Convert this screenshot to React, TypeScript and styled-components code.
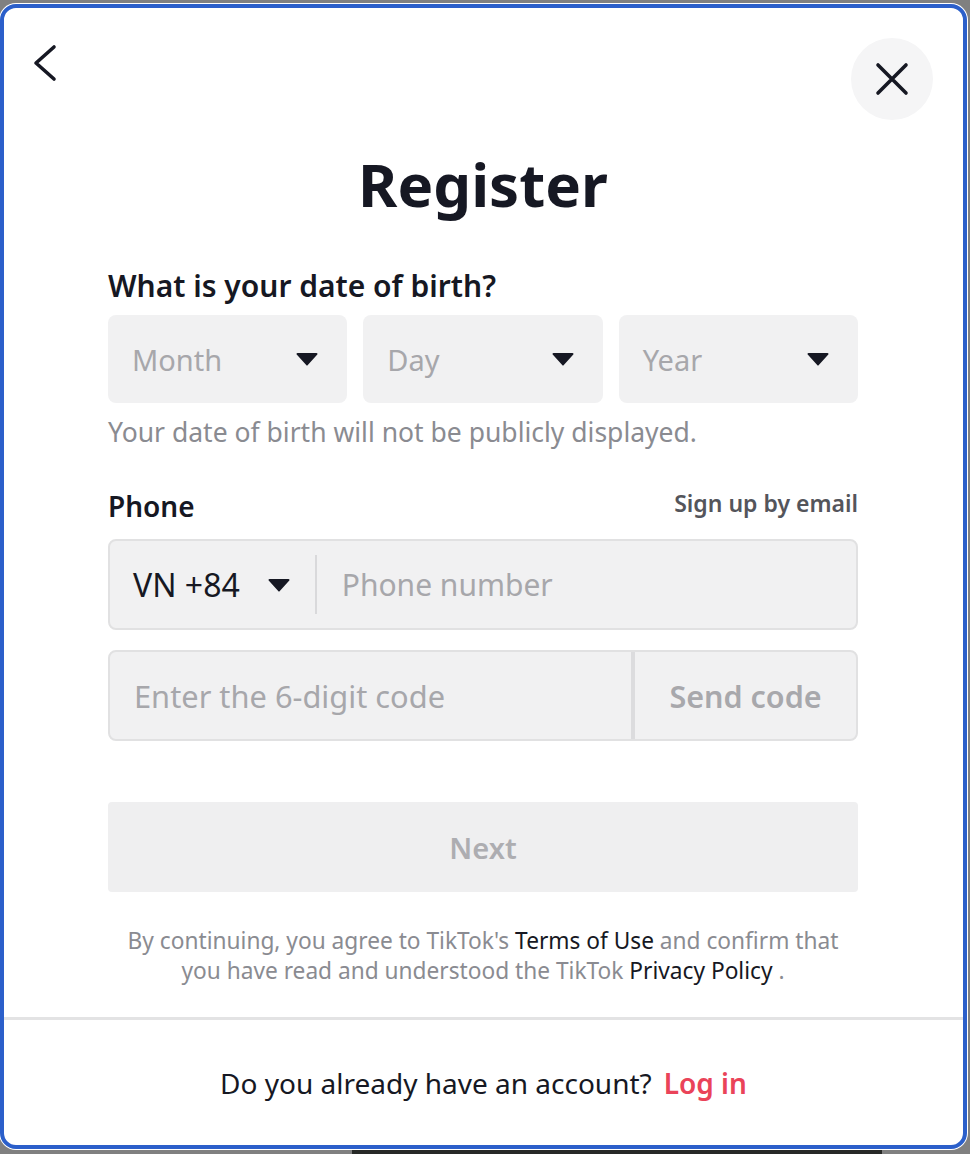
import React from "react";
import styled, { createGlobalStyle } from "styled-components";

const GlobalStyle = createGlobalStyle`
  html, body {
    margin: 0;
    padding: 0;
  }
  body {
    width: 970px;
    height: 1154px;
    overflow: hidden;
    background-color: #808080;
    background-image: linear-gradient(90deg, transparent 352px, #272927 352px, #272927 882px, transparent 882px);
    background-size: 100% 4px;
    background-position: bottom left;
    background-repeat: no-repeat;
    font-family: "Noto Sans", "Liberation Sans", sans-serif;
    color: #161823;
  }
  * { box-sizing: border-box; }
`;

const Modal = styled.div`
  margin-top: 4px;
  width: 967px;
  height: 1145px;
  border: 4px solid #2b5fca;
  border-radius: 16px;
  box-shadow: 0 0 0 1px #ffffff;
  background: #ffffff;
  display: flex;
  flex-direction: column;
  overflow: hidden;
`;

const TopBar = styled.div`
  display: flex;
  justify-content: space-between;
  align-items: flex-start;
  padding: 30px 30px 0 22px;
`;

const IconButton = styled.button`
  border: none;
  background: transparent;
  padding: 0;
  margin-top: 1px;
  display: flex;
  cursor: pointer;
`;

const CloseButton = styled.button`
  width: 82px;
  height: 82px;
  border-radius: 50%;
  border: none;
  background: #f5f5f6;
  display: flex;
  align-items: center;
  justify-content: center;
  padding: 0;
  cursor: pointer;
`;

const Body = styled.div`
  flex: 1;
  display: flex;
  flex-direction: column;
  padding: 0 105px 0 104px;
`;

const Title = styled.h1`
  margin: 26px 0 0;
  text-align: center;
  font-size: 60px;
  line-height: 76px;
  font-weight: 700;
  color: #161823;
`;

const Label = styled.div<{ $mt: number; $fs: number }>`
  margin-top: ${(p) => p.$mt}px;
  font-size: ${(p) => p.$fs}px;
  line-height: 36px;
  font-weight: 600;
  color: #161823;
`;

const LabelRow = styled.div`
  margin-top: 40px;
  height: 36px;
  display: flex;
  justify-content: space-between;
  align-items: center;
`;

const SideLink = styled.a`
  font-size: 23px;
  font-weight: 600;
  color: #54555b;
  text-decoration: none;
  margin-top: -6px;
`;

const SelectRow = styled.div`
  margin-top: 11px;
  display: grid;
  grid-template-columns: 1fr 1fr 1fr;
  gap: 16px;
`;

const SelectBox = styled.div`
  height: 88px;
  border-radius: 8px;
  background: #f1f1f2;
  display: flex;
  align-items: center;
  justify-content: space-between;
  padding: 0 29px 0 24px;
  font-size: 29px;
  color: #a7a7ab;
`;

const Helper = styled.div`
  margin-top: 13px;
  font-size: 26.5px;
  line-height: 32px;
  color: #8a8b91;
`;

const Field = styled.div<{ $mt: number }>`
  margin-top: ${(p) => p.$mt}px;
  height: 91px;
  border: 2px solid #e1e1e2;
  border-radius: 8px;
  background: #f1f1f2;
  display: flex;
  align-items: center;
  overflow: hidden;
`;

const Country = styled.div`
  display: flex;
  align-items: center;
  gap: 28px;
  padding: 0 25px 0 23px;
  font-size: 32px;
  color: #161823;
`;

const Divider = styled.div`
  width: 2px;
  height: 59px;
  background: #d9d9db;
`;

const Placeholder = styled.div<{ $pl: number; $fs: number }>`
  flex: 1;
  padding-left: ${(p) => p.$pl}px;
  font-size: ${(p) => p.$fs}px;
  color: #a7a7ab;
`;

const SendButton = styled.div`
  width: 225px;
  align-self: stretch;
  border-left: 4px solid #dcdcde;
  display: flex;
  align-items: center;
  justify-content: center;
  font-size: 30.5px;
  font-weight: 600;
  color: #a8a8ac;
`;

const NextButton = styled.div`
  margin-top: 61px;
  height: 90px;
  border-radius: 4px;
  background: #efeff0;
  display: flex;
  align-items: center;
  justify-content: center;
  font-size: 29px;
  font-weight: 600;
  color: #adadb1;
`;

const Terms = styled.p`
  margin: 34px 0 0;
  text-align: center;
  font-size: 22.7px;
  line-height: 30px;
  color: #8a8b91;
`;

const TermsLink = styled.a`
  color: #161823;
  text-decoration: none;
`;

const Footer = styled.div`
  height: 128px;
  border-top: 3px solid #e3e3e4;
  display: flex;
  align-items: center;
  justify-content: center;
  gap: 12px;
  font-size: 28px;
  color: #161823;
`;

const LoginLink = styled.a`
  color: #ea4359;
  font-weight: 600;
  text-decoration: none;
`;

const Caret = () => (
  <svg width={22} height={14} viewBox="0 0 22 14" aria-hidden>
    <path d="M1.5 1 H20.5 a1 1 0 0 1 0.8 1.6 L11.8 13 a1 1 0 0 1 -1.6 0 L0.7 2.6 A1 1 0 0 1 1.5 1 Z" fill="#161823" />
  </svg>
);

const Back = () => (
  <svg width={40} height={48} viewBox="0 0 40 48" aria-hidden>
    <path d="M28 8 L10 24 L28 40" fill="none" stroke="#161823" strokeWidth={3.6} strokeLinecap="round" strokeLinejoin="round" />
  </svg>
);

const CloseIcon = () => (
  <svg width={34} height={34} viewBox="0 0 34 34" aria-hidden>
    <path d="M3 3 L31 31 M31 3 L3 31" fill="none" stroke="#161823" strokeWidth={3.6} strokeLinecap="round" />
  </svg>
);

export default function App() {
  return (
    <>
      <GlobalStyle />
      <Modal>
        <TopBar>
          <IconButton aria-label="Back">
            <Back />
          </IconButton>
          <CloseButton aria-label="Close">
            <CloseIcon />
          </CloseButton>
        </TopBar>
        <Body>
          <Title>Register</Title>
          <Label $mt={46} $fs={30}>What is your date of birth?</Label>
          <SelectRow>
            {["Month", "Day", "Year"].map((t) => (
              <SelectBox key={t}>
                <span>{t}</span>
                <Caret />
              </SelectBox>
            ))}
          </SelectRow>
          <Helper>Your date of birth will not be publicly displayed.</Helper>
          <LabelRow>
            <Label $mt={0} $fs={28}>Phone</Label>
            <SideLink href="#">Sign up by email</SideLink>
          </LabelRow>
          <Field $mt={15}>
            <Country>
              <span>VN +84</span>
              <Caret />
            </Country>
            <Divider />
            <Placeholder $pl={25} $fs={30}>Phone number</Placeholder>
          </Field>
          <Field $mt={20}>
            <Placeholder $pl={24} $fs={30.8}>Enter the 6-digit code</Placeholder>
            <SendButton>Send code</SendButton>
          </Field>
          <NextButton>Next</NextButton>
          <Terms>
            By continuing, you agree to TikTok's <TermsLink href="#">Terms of Use</TermsLink> and confirm that
            <br />
            you have read and understood the TikTok <TermsLink href="#">Privacy Policy</TermsLink> .
          </Terms>
        </Body>
        <Footer>
          <span>Do you already have an account?</span>
          <LoginLink href="#">Log in</LoginLink>
        </Footer>
      </Modal>
    </>
  );
}
